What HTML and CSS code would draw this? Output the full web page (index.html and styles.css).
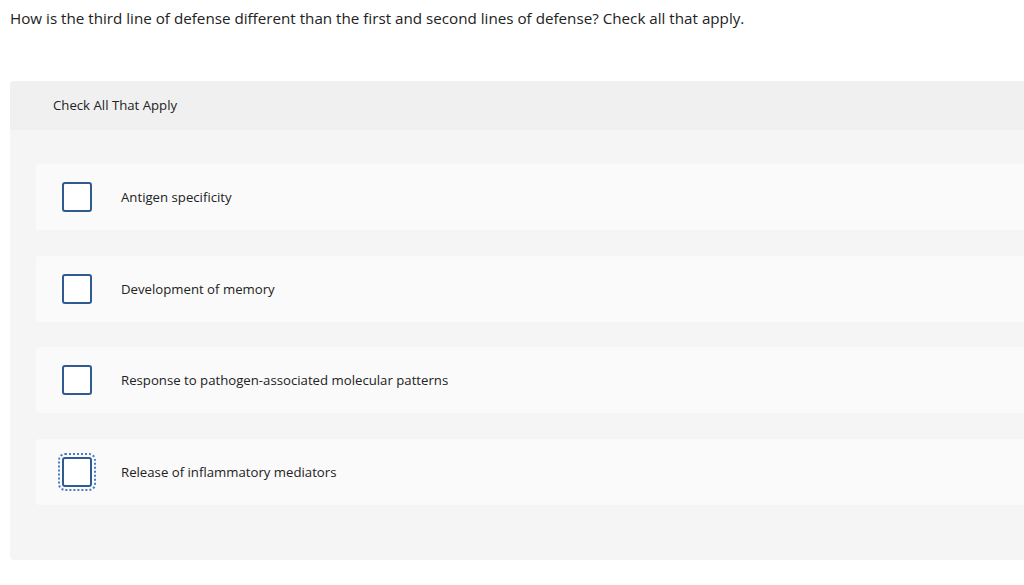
FILE: index.html
```html
<!DOCTYPE html>
<html lang="en">
<head>
    <meta charset="UTF-8">
    <meta name="viewport" content="width=device-width, initial-scale=1.0">
    <title>Check All That Apply</title>
    <link rel="stylesheet" href="styles.css">
</head>
<body>
    <p class="question">How is the third line of defense different than the first and second lines of defense? Check all that apply.</p>

    <div class="panel">
        <div class="panel-head">Check All That Apply</div>
        <div class="panel-body">
            <label class="choice">
                <span class="box"></span>
                <span class="choice-text">Antigen specificity</span>
            </label>
            <label class="choice">
                <span class="box"></span>
                <span class="choice-text">Development of memory</span>
            </label>
            <label class="choice">
                <span class="box"></span>
                <span class="choice-text">Response to pathogen-associated molecular patterns</span>
            </label>
            <label class="choice">
                <span class="box focused"></span>
                <span class="choice-text">Release of inflammatory mediators</span>
            </label>
        </div>
    </div>
</body>
</html>
```

FILE: styles.css
```css
html {
    overflow-x: hidden;
}

body {
    font-family: "Open Sans", Lato, Arial, sans-serif;
    color: #222;
    background-color: #fff;
    margin: 0;
    padding: 0 0 0 10px;
    overflow-x: hidden;
}

.question {
    font-size: 15.2px;
    margin: 0;
    padding-top: 8px;
    line-height: 20px;
}

.panel {
    margin-top: 53px;
    width: 1040px;
    border-radius: 4px;
    background-color: #f5f5f5;
    overflow: hidden;
}

.panel-head {
    background-color: #f0f0f0;
    height: 49px;
    padding-left: 43px;
    font-size: 13.2px;
    line-height: 49px;
}

.panel-body {
    padding: 34px 0 55px 26px;
    display: flex;
    flex-direction: column;
    gap: 25.7px;
}

.choice {
    display: flex;
    align-items: center;
    height: 66px;
    background-color: #fafafa;
    border-radius: 3px;
    padding-left: 26px;
    font-size: 13.2px;
}

.box {
    width: 26px;
    height: 26px;
    border: 2px solid #2f5a92;
    border-radius: 3px;
    background-color: #fff;
    flex-shrink: 0;
}

.box.focused {
    outline: 2px dotted #4a7bc8;
    outline-offset: 2px;
}

.choice-text {
    margin-left: 29px;
}
```
